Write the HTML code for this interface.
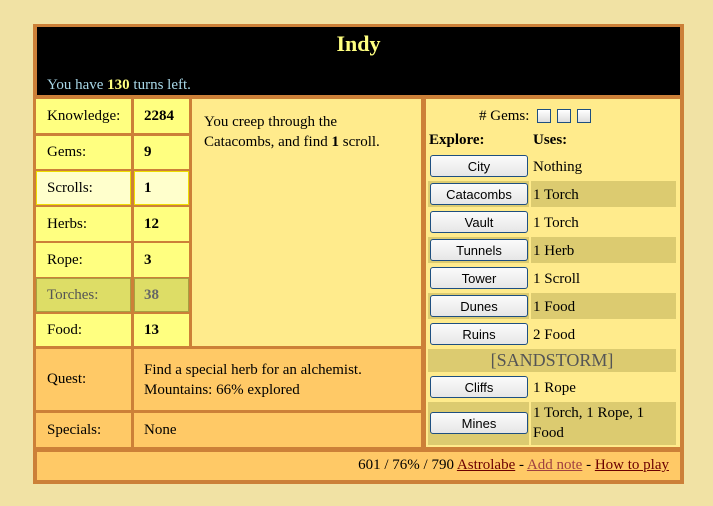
<!DOCTYPE html><html><head><style>
body{margin:0;width:713px;height:506px;background:#f1e2a4;position:relative;overflow:hidden;font-family:"Liberation Serif",serif;font-size:15px;color:#000}
div{position:absolute;box-sizing:border-box}
.c{display:flex;align-items:center}
.y{background:#ffff80}
.btn{left:430px;width:98px;height:22px;border:1px solid #1e4f80;border-radius:3px;background:linear-gradient(#fbfbfb,#e6e6e6);font-family:"Liberation Sans",sans-serif;font-size:13px;display:flex;align-items:center;justify-content:center}
.u{left:533px;display:flex;align-items:center}
.band{background:#dccb70}
a{color:#6b0000}
</style></head><body>
<div style="left:33px;top:24px;width:651px;height:460px;background:#cc8038"></div>
<div style="left:37px;top:27px;width:643px;height:68px;background:#000"></div>
<div style="left:37px;top:31px;width:643px;text-align:center;color:#ffff80;font-weight:bold;font-size:22px">Indy</div>
<div style="left:47px;top:77px;color:#a8d8e8;font-size:15px">You have <b style="color:#ffff80">130</b> turns left.</div>

<div class="y c" style="left:36px;top:99px;width:95px;height:34px;padding-left:11px">Knowledge:</div>
<div class="y c" style="left:134px;top:99px;width:55px;height:34px;padding-left:10px;font-weight:bold">2284</div>
<div class="y c" style="left:36px;top:136px;width:95px;height:33px;padding-left:11px">Gems:</div>
<div class="y c" style="left:134px;top:136px;width:55px;height:33px;padding-left:10px;font-weight:bold">9</div>
<div class="c" style="left:36px;top:171px;width:95px;height:34px;padding-left:10px;background:#ffffcc;border:1px solid #eedd00">Scrolls:</div>
<div class="c" style="left:134px;top:171px;width:55px;height:34px;padding-left:9px;background:#ffffcc;border:1px solid #eedd00;font-weight:bold">1</div>
<div class="y c" style="left:36px;top:207px;width:95px;height:34px;padding-left:11px">Herbs:</div>
<div class="y c" style="left:134px;top:207px;width:55px;height:34px;padding-left:10px;font-weight:bold">12</div>
<div class="y c" style="left:36px;top:243px;width:95px;height:34px;padding-left:11px">Rope:</div>
<div class="y c" style="left:134px;top:243px;width:55px;height:34px;padding-left:10px;font-weight:bold">3</div>
<div class="c" style="left:36px;top:278px;width:95px;height:34px;padding-left:10px;background:#dddd66;border:1px solid #a8a040;color:#555">Torches:</div>
<div class="c" style="left:134px;top:278px;width:55px;height:34px;padding-left:9px;background:#dddd66;border:1px solid #a8a040;color:#666;font-weight:bold">38</div>
<div class="y c" style="left:36px;top:314px;width:95px;height:32px;padding-left:11px">Food:</div>
<div class="y c" style="left:134px;top:314px;width:55px;height:32px;padding-left:10px;font-weight:bold">13</div>

<div style="left:192px;top:99px;width:229px;height:247px;background:#ffeb8c;padding:13px 12px;line-height:20px"><div style="position:static;width:180px">You creep through the Catacombs, and find <b>1</b> scroll.</div></div>

<div class="c" style="left:36px;top:349px;width:95px;height:61px;background:#ffc966;padding-left:11px">Quest:</div>
<div style="left:134px;top:349px;width:287px;height:61px;background:#ffc966;padding:11px 10px;line-height:20px">Find a special herb for an alchemist.<br>Mountains: 66% explored</div>
<div class="c" style="left:36px;top:413px;width:95px;height:34px;background:#ffc966;padding-left:11px">Specials:</div>
<div class="c" style="left:134px;top:413px;width:287px;height:34px;background:#ffc966;padding-left:10px">None</div>

<div style="left:426px;top:99px;width:254px;height:348px;background:#ffeb8c"></div>
<div class="c" style="left:479px;top:107px;height:18px">#&nbsp;Gems:&nbsp;
<span style="display:inline-block;width:12px;height:12px;border:1px solid #1e4f80;background:linear-gradient(#fff,#ddd);margin-left:4px"></span>
<span style="display:inline-block;width:12px;height:12px;border:1px solid #1e4f80;background:linear-gradient(#fff,#ddd);margin-left:6px"></span>
<span style="display:inline-block;width:12px;height:12px;border:1px solid #1e4f80;background:linear-gradient(#fff,#ddd);margin-left:6px"></span></div>
<div style="left:429px;top:132px;font-weight:bold">Explore:</div>
<div style="left:533px;top:132px;font-weight:bold">Uses:</div>

<div class="band" style="left:428px;top:181px;width:101px;height:26px"></div><div class="band" style="left:531px;top:181px;width:145px;height:26px"></div>
<div class="band" style="left:428px;top:237px;width:101px;height:26px"></div><div class="band" style="left:531px;top:237px;width:145px;height:26px"></div>
<div class="band" style="left:428px;top:293px;width:101px;height:26px"></div><div class="band" style="left:531px;top:293px;width:145px;height:26px"></div>
<div class="band" style="left:428px;top:349px;width:248px;height:23px;color:#555;font-size:18px;display:flex;align-items:center;justify-content:center">[SANDSTORM]</div>
<div class="band" style="left:428px;top:402px;width:101px;height:43px"></div><div class="band" style="left:531px;top:402px;width:145px;height:43px"></div>

<div class="btn" style="top:155px">City</div><div class="u" style="top:156px;height:22px">Nothing</div>
<div class="btn" style="top:183px">Catacombs</div><div class="u" style="top:184px;height:22px">1 Torch</div>
<div class="btn" style="top:211px">Vault</div><div class="u" style="top:212px;height:22px">1 Torch</div>
<div class="btn" style="top:239px">Tunnels</div><div class="u" style="top:240px;height:22px">1 Herb</div>
<div class="btn" style="top:267px">Tower</div><div class="u" style="top:268px;height:22px">1 Scroll</div>
<div class="btn" style="top:295px">Dunes</div><div class="u" style="top:296px;height:22px">1 Food</div>
<div class="btn" style="top:323px">Ruins</div><div class="u" style="top:324px;height:22px">2 Food</div>
<div class="btn" style="top:376px">Cliffs</div><div class="u" style="top:377px;height:22px">1 Rope</div>
<div class="btn" style="top:412px">Mines</div><div style="left:533px;top:403px;width:125px;line-height:20px">1 Torch, 1 Rope, 1 Food</div>

<div style="left:37px;top:452px;width:643px;height:28px;background:#ffc966"></div>
<div style="left:300px;top:457px;width:369px;text-align:right;font-size:15px">601 / 76% / 790 <a href="#">Astrolabe</a> - <a href="#" style="color:#a04040">Add note</a> - <a href="#">How to play</a></div>
</body></html>
